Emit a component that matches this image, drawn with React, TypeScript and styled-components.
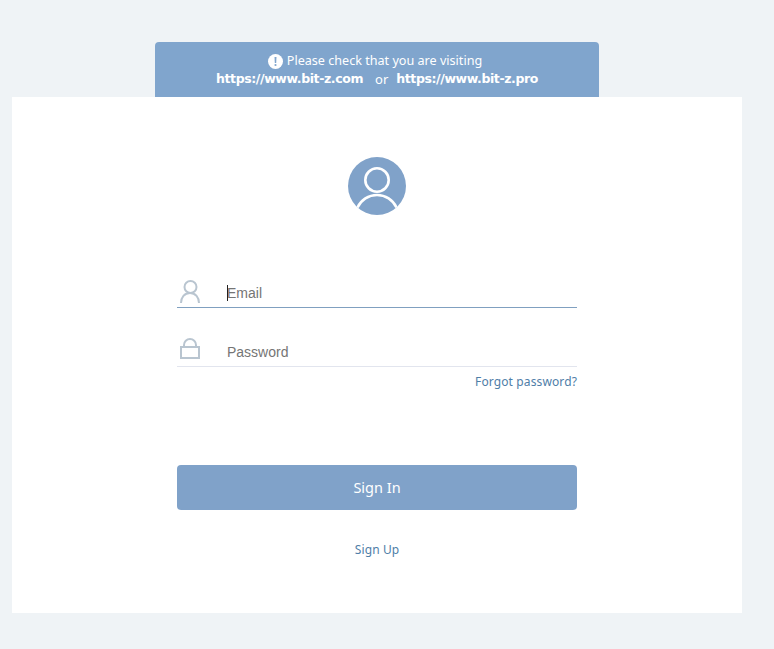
import styled, { createGlobalStyle } from "styled-components";

const GlobalStyle = createGlobalStyle`
    html, body {
        margin: 0;
        padding: 0;
        background: #eff3f6;
    }
    * {
        box-sizing: border-box;
    }
`;

const Page = styled.div`
    width: 774px;
    height: 649px;
    padding: 42px 0 0 12px;
    overflow: hidden;
    font-family: "Noto Sans", "Open Sans", sans-serif;
`;

const Notice = styled.div`
    width: 444px;
    height: 55px;
    margin-left: 143px;
    padding-top: 10px;
    background: #80a5cd;
    border-radius: 4px 4px 0 0;
    color: #fff;
    font-size: 12.6px;
    line-height: 18px;
    text-align: center;
`;

const NoticeRow = styled.div<{ $lead?: boolean }>`
    display: flex;
    justify-content: center;
    align-items: center;
    height: 18px;
    gap: 4px;
    padding-right: ${(p) => (p.$lead ? "4px" : "0")};
`;

const Url = styled.b`
    font-family: "DejaVu Sans", sans-serif;
    font-size: 12.5px;
    font-weight: 700;
    letter-spacing: -0.4px;
`;

const Or = styled.span`
    margin: 0 4px 0 8px;
    font-size: 13px;
`;

const Card = styled.div`
    width: 730px;
    height: 516px;
    padding-top: 60px;
    background: #fff;
`;

const Avatar = styled.div`
    width: 58px;
    height: 58px;
    margin: 0 auto 63px;
    svg {
        display: block;
    }
`;

const Form = styled.form`
    width: 400px;
    margin: 0 auto;
`;

const Field = styled.label<{ $active?: boolean }>`
    position: relative;
    display: flex;
    align-items: flex-end;
    height: 30px;
    margin-bottom: ${(p) => (p.$active ? "29px" : "0")};
    border-bottom: 1px solid ${(p) => (p.$active ? "#80a0c0" : "#e2e5ee")};
    svg {
        flex: none;
        display: block;
        margin: 0 0 3px 2px;
        overflow: visible;
    }
`;

const Input = styled.input`
    flex: 1;
    min-width: 0;
    height: 28px;
    margin-left: 26px;
    padding: 0;
    border: 0;
    outline: 0;
    background: transparent;
    font-family: "Liberation Sans", Arial, sans-serif;
    font-size: 14px;
    color: #333;
    &::placeholder {
        color: #757575;
        opacity: 1;
    }
`;

const Caret = styled.span`
    position: absolute;
    left: 50px;
    top: 7px;
    width: 1px;
    height: 16px;
    background: #222;
`;

const Forgot = styled.a`
    display: block;
    margin-top: 7px;
    color: #4f7ea8;
    font-size: 12px;
    line-height: 16px;
    letter-spacing: 0.12px;
    text-align: right;
`;

const Submit = styled.button`
    display: block;
    width: 100%;
    height: 45px;
    margin-top: 75px;
    padding: 0 0 2px;
    border: 0;
    border-radius: 4px;
    background: #80a2c9;
    color: #fff;
    font-family: "Noto Sans", sans-serif;
    font-size: 14.5px;
`;

const SignUp = styled.a`
    display: block;
    margin-top: 31px;
    color: #4f7ea8;
    font-size: 12px;
    line-height: 18px;
    letter-spacing: 0.12px;
    text-align: center;
`;

const AlertIcon = () => (
    <svg width="15" height="15" viewBox="0 0 15 15">
        <circle cx="7.5" cy="7.5" r="7.5" fill="#fff" />
        <path d="M6.500 3h2l-.3 6H6.800z" fill="#80a5cd" />
        <circle cx="7.5" cy="11" r="1.1" fill="#80a5cd" />
    </svg>
);

const AvatarIcon = () => (
    <svg width="58" height="58" viewBox="0 0 58 58">
        <circle cx="29" cy="29" r="29" fill="#80a2c9" />
        <circle cx="29" cy="23" r="11.7" fill="none" stroke="#fff" strokeWidth="2.6" />
        <path d="M9.500 50.500C13 43 20.500 38 29 38s16 5 19.500 12.500" fill="none" stroke="#fff" strokeWidth="2.6" />
    </svg>
);

const UserIcon = () => (
    <svg width="22" height="24" viewBox="0 0 22 24" fill="none" stroke="#b9c5d0" strokeWidth="2">
        <circle cx="11.500" cy="7" r="6" />
        <path d="M2 23C2 17.500 5.500 13 11 13s9 4.500 9 10" />
    </svg>
);

const LockIcon = () => (
    <svg width="22" height="24" viewBox="0 0 22 24" fill="none" stroke="#b9c5d0" strokeWidth="2">
        <rect x="2" y="8" width="18" height="11" />
        <path d="M5 8V6a6 6 0 0 1 12 0v2" />
    </svg>
);

export default function App() {
    return (
        <Page>
            <GlobalStyle />
            <Notice>
                <NoticeRow $lead>
                    <AlertIcon />
                    <span>Please check that you are visiting</span>
                </NoticeRow>
                <NoticeRow>
                    <Url>https://www.bit-z.com</Url>
                    <Or>or</Or>
                    <Url>https://www.bit-z.pro</Url>
                </NoticeRow>
            </Notice>
            <Card>
                <Avatar>
                    <AvatarIcon />
                </Avatar>
                <Form>
                    <Field $active>
                        <UserIcon />
                        <Input type="text" placeholder="Email" />
                        <Caret />
                    </Field>
                    <Field>
                        <LockIcon />
                        <Input type="password" placeholder="Password" />
                    </Field>
                    <Forgot>Forgot password?</Forgot>
                    <Submit type="button">Sign In</Submit>
                    <SignUp>Sign Up</SignUp>
                </Form>
            </Card>
        </Page>
    );
}
